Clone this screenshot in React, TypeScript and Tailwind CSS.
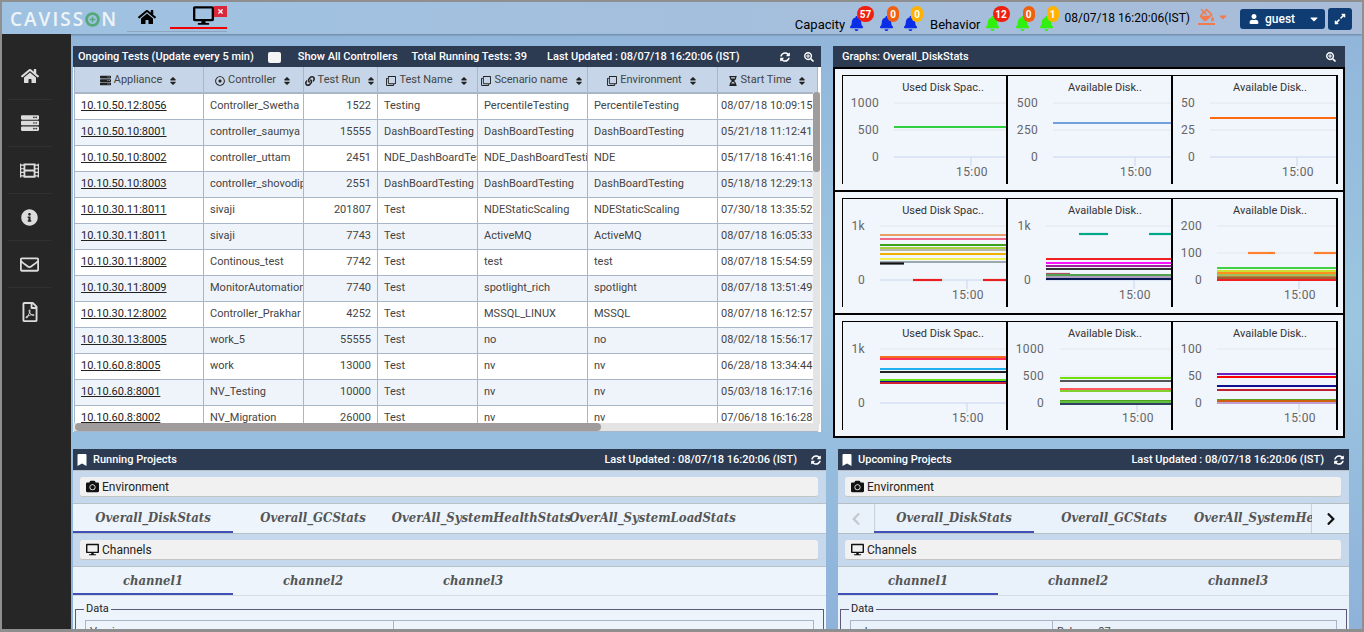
import { FaHome, FaDesktop, FaTimes, FaServer, FaFilm, FaInfoCircle, FaRegEnvelope, FaRegFilePdf, FaBell, FaUser, FaCaretDown, FaExpandAlt, FaCamera, FaBookmark, FaSyncAlt, FaSearchPlus, FaSort, FaRegDotCircle, FaLink, FaRegClone, FaHourglassHalf, FaFillDrip, FaChevronLeft, FaChevronRight } from 'react-icons/fa';
import type { ReactNode } from 'react';

const cols = [
  { label: 'Appliance', icon: <FaServer size={11} />, w: 'w-[129px]' },
  { label: 'Controller', icon: <FaRegDotCircle size={10} />, w: 'w-[100px]' },
  { label: 'Test Run', icon: <FaLink size={10} />, w: 'w-[74px]' },
  { label: 'Test Name', icon: <FaRegClone size={10} />, w: 'w-[100px]' },
  { label: 'Scenario name', icon: <FaRegClone size={10} />, w: 'w-[110px]' },
  { label: 'Environment', icon: <FaRegClone size={10} />, w: 'w-[130px]' },
  { label: 'Start Time', icon: <FaHourglassHalf size={10} />, w: 'w-[100px]' },
];

const rows = [
  ['10.10.50.12:8056', 'Controller_Swetha', '1522', 'Testing', 'PercentileTesting', 'PercentileTesting', '08/07/18 10:09:15'],
  ['10.10.50.10:8001', 'controller_saumya', '15555', 'DashBoardTesting', 'DashBoardTesting', 'DashBoardTesting', '05/21/18 11:12:41'],
  ['10.10.50.10:8002', 'controller_uttam', '2451', 'NDE_DashBoardTesting', 'NDE_DashBoardTesting', 'NDE', '05/17/18 16:41:16'],
  ['10.10.50.10:8003', 'controller_shovodip', '2551', 'DashBoardTesting', 'DashBoardTesting', 'DashBoardTesting', '05/18/18 12:29:13'],
  ['10.10.30.11:8011', 'sivaji', '201807', 'Test', 'NDEStaticScaling', 'NDEStaticScaling', '07/30/18 13:35:52'],
  ['10.10.30.11:8011', 'sivaji', '7743', 'Test', 'ActiveMQ', 'ActiveMQ', '08/07/18 16:05:33'],
  ['10.10.30.11:8002', 'Continous_test', '7742', 'Test', 'test', 'test', '08/07/18 15:54:59'],
  ['10.10.30.11:8009', 'MonitorAutomation', '7740', 'Test', 'spotlight_rich', 'spotlight', '08/07/18 13:51:49'],
  ['10.10.30.12:8002', 'Controller_Prakhar', '4252', 'Test', 'MSSQL_LINUX', 'MSSQL', '08/07/18 16:12:57'],
  ['10.10.30.13:8005', 'work_5', '55555', 'Test', 'no', 'no', '08/02/18 15:56:17'],
  ['10.10.60.8:8005', 'work', '13000', 'Test', 'nv', 'nv', '06/28/18 13:34:44'],
  ['10.10.60.8:8001', 'NV_Testing', '10000', 'Test', 'nv', 'nv', '05/03/18 16:17:16'],
  ['10.10.60.8:8002', 'NV_Migration', '26000', 'Test', 'nv', 'nv', '07/06/18 16:16:28'],
];

type Seg = { y: number; color: string; from?: number; to?: number };
type ChartProps = { title: string; labels: string[]; labelRight: number; left: number; tick: number; top?: number; bottom?: number; segs: Seg[] };

function Chart({ title, labels, labelRight, left, tick, top = 27, bottom = 81, segs }: ChartProps) {
  const mid = (top + bottom) / 2;
  const ys = labels.length === 3 ? [top, mid, bottom] : [top, bottom];
  return (
    <svg viewBox="0 0 163 108" className="h-[108px] w-[165px] shrink-0 border-r-2 border-black bg-[#f1f5fc] [font-family:Roboto,sans-serif]">
      <text x={title.startsWith('Used') ? 100 : 97} y="15" textAnchor="middle" fontSize="11" fill="#333">{title}</text>
      {ys.map((y, i) => (
        <g key={i}>
          <line x1={left} x2="163" y1={y} y2={y} stroke={i === ys.length - 1 ? '#c8d6ee' : '#e4e6e8'} />
          <text x={labelRight} y={y + 3.5} textAnchor="end" fontSize="12" fill="#666" letterSpacing="0.3">{labels[i]}</text>
        </g>
      ))}
      <line x1={tick} x2={tick} y1={bottom} y2={bottom + 9} stroke="#c8d6ee" />
      <text x={tick + 1} y={bottom + 19} textAnchor="middle" fontSize="12" fill="#666" letterSpacing="0.4">15:00</text>
      {segs.map((s, i) => (
        <line key={i} x1={s.from ?? left} x2={s.to ?? 163} y1={s.y} y2={s.y} stroke={s.color} strokeWidth="2.2" />
      ))}
    </svg>
  );
}

function ChartRow({ children }: { children: ReactNode }) {
  return <div className="flex h-[123px] border-b-2 border-black pt-[6px] pl-[7px] last:border-b-0">
    <div className="flex h-[109px] border border-r-0 border-black">{children}</div>
  </div>;
}

function Bell({ color, badge, badgeColor, wide }: { color: string; badge: string; badgeColor: string; wide?: boolean }) {
  return (
    <div className="relative mt-[14px] h-[16px] w-[13px]">
      <FaBell size={15} color={color} />
      <span className={`absolute top-[-10px] left-[8px] flex h-[16px] items-center justify-center rounded-full text-[10px] font-bold text-white ${wide ? 'w-[17px]' : 'w-[12px]'} ${badgeColor}`}>{badge}</span>
    </div>
  );
}

function PanelHead({ title, right }: { title: string; right: ReactNode }) {
  return (
    <div className="flex h-[21px] items-center justify-between bg-[#2c3a52] pt-[1px] pr-[5px] pl-[3px] text-[11px] font-medium text-white">
      <div className="flex items-center gap-[5px]"><FaBookmark size={12} />{title}</div>
      {right}
    </div>
  );
}

function Bar({ icon, label }: { icon: ReactNode; label: string }) {
  return (
    <div className="border-y border-[#b8c0c8] bg-[#c6d8ec] py-[6px] pr-[8px] pl-[7px]">
      <div className="flex h-[20px] items-center gap-[3px] rounded-[3px] border-b border-[#c4c4c4] bg-[#f1f1f1] pl-[6px] text-[12px] text-[#222]">{icon}{label}</div>
    </div>
  );
}

function Tab({ label, active, w = 'min-w-[160px]' }: { label: string; active?: boolean; w?: string }) {
  return (
    <div className={`flex h-full shrink-0 items-center justify-center border-b-2 pt-[1px] [font-family:DejaVu_Serif_Condensed,DejaVu_Serif,serif] text-[13px] font-bold whitespace-nowrap text-[#555] italic ${w} ${active ? 'border-[#3f51b5]' : 'border-transparent'}`}>{label}</div>
  );
}

const chanTabs = (
  <div className="flex h-[29px] border-b border-[#d4dce4]">
    <Tab label="channel1" active />
    <Tab label="channel2" />
    <Tab label="channel3" />
  </div>
);

function DataBox({ leftW, left, right }: { leftW: string; left: string; right: string }) {
  return (
    <fieldset className="mx-[2px] mt-[7px] h-[40px] border border-[#5a5a78] px-[9px]">
      <legend className="ml-[-1px] px-[2px] text-[11px] leading-[12px] text-[#222]">Data</legend>
      <div className="mt-[5px] flex h-[30px] border border-[#a8b4c8] text-[11px] text-[#444]">
        <div className={`border-r border-[#a8b4c8] pt-[3px] pl-[4px] ${leftW}`}>{left}</div>
        <div className="pt-[3px] pl-[4px]">{right}</div>
      </div>
    </fieldset>
  );
}

export default function App() {
  return (
    <div className="h-[632px] w-[1364px] overflow-hidden border-2 border-b-[3px] border-[#8f8f8f] bg-gradient-to-b from-[#90b4da] via-[#9cc6e0] to-[#8fb2da] [font-family:Roboto,sans-serif] text-[#444]">
      {/* top bar */}
      <div className="flex h-[32px] items-start bg-gradient-to-r from-[#9fc2e2] to-[#a8bcd8] shadow-[0_1px_2px_rgba(0,0,0,0.3)]">
        <div className="mt-[3px] ml-[8px] flex w-[117px] items-center [font-family:Open_Sans,sans-serif] text-[19px] font-semibold tracking-[2px] text-[#eef4f6]">
          CAVISS
          <svg viewBox="0 0 16 16" className="mr-[1px] h-[15px] w-[15px] shrink-0"><circle cx="8" cy="8" r="6.3" fill="none" stroke="#55a87a" strokeWidth="3" /><path d="M8 5v6M5 8h6" stroke="#55a87a" strokeWidth="1.5" /></svg>
          N
        </div>
        <div className="flex h-[30px] border-b border-[#8ea6bf]">
          <div className="flex w-[43px] justify-center pt-[6px] pr-[4px] text-black"><FaHome size={18} /></div>
          <div className="relative flex h-[27px] w-[57px] justify-end border-b-2 border-[#f00000] pt-[3px] pr-[13px] text-black">
            <FaDesktop size={21} />
            <span className="absolute top-[4px] right-0 flex h-[11px] w-[13px] items-center justify-center bg-[#d9283c] text-white"><FaTimes size={7} /></span>
          </div>
        </div>
        <div className="ml-auto flex items-start pr-[10px] text-black">
          <span className="mt-[15px] mr-[4px] text-[13px] leading-[16px]">Capacity</span>
          <Bell color="#0a2ee8" badge="57" badgeColor="bg-[#f02010]" wide />
          <div className="w-[17px]" />
          <Bell color="#0a2ee8" badge="0" badgeColor="bg-[#f06010]" />
          <div className="w-[11px]" />
          <Bell color="#0a2ee8" badge="0" badgeColor="bg-[#ffb300]" />
          <span className="mt-[15px] mr-[4px] ml-[14px] text-[13px] leading-[16px]">Behavior</span>
          <Bell color="#30f010" badge="12" badgeColor="bg-[#f02010]" wide />
          <div className="w-[17px]" />
          <Bell color="#30f010" badge="0" badgeColor="bg-[#f06010]" />
          <div className="w-[11px]" />
          <Bell color="#30f010" badge="1" badgeColor="bg-[#ffb300]" />
          <span className="mt-[8px] ml-[13px] text-[12px] leading-[16px] whitespace-nowrap">08/07/18 16:20:06(IST)</span>
          <span className="mt-[6px] ml-[8px] flex w-[17px] flex-col items-center text-[#f47a50]"><FaFillDrip size={14} /><span className="mt-[1px] h-[2px] w-[17px] bg-[#f47a50]" /></span>
          <span className="mt-[9px] ml-[2px] text-[#f47a50]"><FaCaretDown size={12} /></span>
          <div className="mt-[7px] ml-[11px] flex h-[20px] w-[85px] items-center rounded-[3px] bg-[#0f3c72] pr-[5px] pl-[9px] text-[12px] font-medium text-white">
            <FaUser size={10} /><span className="ml-[6px]">guest</span><span className="ml-auto"><FaCaretDown size={12} /></span>
          </div>
          <div className="mt-[6px] ml-[3px] flex h-[22px] w-[24px] items-center justify-center rounded-[3px] bg-[#0f3c72] text-white"><FaExpandAlt size={12} /></div>
        </div>
      </div>

      <div className="flex h-[598px]">
        {/* sidebar */}
        <div className="w-[69px] shrink-0 bg-[#262626] pt-[19px] pr-[19px] pl-[5px] text-[#dcdcdc]">
          {[<FaHome size={18} />, <FaServer size={18} />, <FaFilm size={19} />, <FaInfoCircle size={17} />, <FaRegEnvelope size={19} />, <FaRegFilePdf size={20} />].map((ic, i) => (
            <div key={i} className="flex h-[47px] items-center justify-center border-b border-[#303030] last:border-b-0">{ic}</div>
          ))}
        </div>

        <div className="w-[1291px] shrink-0 px-[2px] pt-[12px]">
          <div className="flex gap-[12px]">
            {/* ongoing tests */}
            <div className="h-[386px] w-[748px] shrink-0 overflow-hidden bg-white">
              <div className="flex h-[21px] items-center bg-[#2c3a52] pt-[1px] pr-[7px] pl-[5px] text-[11px] font-medium text-white">
                <span>Ongoing Tests (Update every 5 min)</span>
                <span className="ml-[14px] h-[11px] w-[13px] rounded-[2px] bg-[#f4f4f4]" />
                <span className="ml-[17px]">Show All Controllers</span>
                <span className="ml-[14px]">Total Running Tests: 39</span>
                <span className="ml-[20px]">Last Updated : 08/07/18 16:20:06 (IST)</span>
                <span className="ml-auto flex gap-[14px]"><FaSyncAlt size={10} /><FaSearchPlus size={10} /></span>
              </div>
              <div className="relative h-[365px] overflow-hidden pl-[1px]">
                <table className="w-[743px] table-fixed border-collapse text-[11px]">
                  <thead>
                    <tr className="h-[26px] bg-[#c6d6e8] text-[#444]">
                      {cols.map((c) => (
                        <th key={c.label} className={`border-x border-b-2 border-[#a9b6c8] px-0 pt-[2px] font-normal whitespace-nowrap ${c.w}`}>
                          <span className="flex items-center justify-center gap-[3px]">
                            <span className="text-[#222]">{c.icon}</span>{c.label}<span className="ml-[3px] text-[#222]"><FaSort size={10} /></span>
                          </span>
                        </th>
                      ))}
                    </tr>
                  </thead>
                  <tbody>
                    {rows.map((r, i) => (
                      <tr key={i} className={`h-[26px] ${i % 2 ? 'bg-[#eff4fa]' : 'bg-white'}`}>
                        {r.map((v, j) => (
                          <td key={j} className={`overflow-hidden border border-[#a9b6c8] px-[6px] whitespace-nowrap ${j === 0 ? 'text-[#222] underline' : ''} ${j === 2 ? 'text-right' : ''} ${j === 6 ? 'pr-0 pl-[3px]' : ''}`}>{v}</td>
                        ))}
                      </tr>
                    ))}
                  </tbody>
                </table>
                <div className="absolute top-[25px] right-[1px] h-[332px] w-[7px] bg-[#e4e4e4]"><div className="h-[80px] w-full rounded-[3px] bg-[#a09c9c]" /></div>
                <div className="absolute bottom-[1px] left-0 h-[8px] w-[746px] bg-[#e4e4e4]"><div className="ml-[2px] h-full w-[526px] rounded-[4px] bg-[#a09c9c]" /></div>
              </div>
            </div>

            {/* graphs */}
            <div className="w-[512px] shrink-0">
              <div className="flex h-[21px] items-center justify-between bg-[#2c3a52] pt-[1px] pr-[9px] pl-[9px] text-[11px] font-medium text-white">
                Graphs: Overall_DiskStats<FaSearchPlus size={10} />
              </div>
              <div className="h-[371px] border-2 border-black bg-[#f1f5fc]">
                <ChartRow>
                  <Chart title="Used Disk Spac.." labels={['1000', '500', '0']} labelRight={36} left={51} tick={128} segs={[{ y: 51, color: '#30d040' }]} />
                  <Chart title="Available Disk.." labels={['500', '250', '0']} labelRight={30} left={45} tick={127} segs={[{ y: 47, color: '#70a0e0' }]} />
                  <Chart title="Available Disk.." labels={['50', '25', '0']} labelRight={22} left={37} tick={124} segs={[{ y: 42, color: '#ff6a10' }]} />
                </ChartRow>
                <ChartRow>
                  <Chart title="Used Disk Spac.." labels={['1k', '0']} labelRight={22} left={37} tick={124} segs={[
                    { y: 36, color: '#e8a06a' }, { y: 40, color: '#f06a8a' }, { y: 46, color: '#3aa31a' }, { y: 49, color: '#a8d040' }, { y: 51, color: '#b8b8a8' },
                    { y: 55, color: '#f0b000' }, { y: 60, color: '#f0f050' }, { y: 63, color: '#9aa8b0' }, { y: 64.5, color: '#111', to: 61 }, { y: 81, color: '#e82020', from: 70, to: 99 }, { y: 81, color: '#e82020', from: 140 },
                  ]} />
                  <Chart title="Available Disk.." labels={['1k', '0']} labelRight={23} left={38} tick={126} segs={[
                    { y: 35, color: '#00a88a', from: 71, to: 100 }, { y: 35, color: '#00a88a', from: 141 }, { y: 60, color: '#f02020' }, { y: 64, color: '#ff10ff' }, { y: 67, color: '#a020a0' },
                    { y: 70, color: '#333' }, { y: 75, color: '#b05060', to: 62 }, { y: 76, color: '#50a050' }, { y: 78, color: '#b0a0c0' }, { y: 80, color: '#0a1a50' },
                  ]} />
                  <Chart title="Available Disk.." labels={['200', '100', '0']} labelRight={29} left={44} tick={126} segs={[
                    { y: 54, color: '#ff8030', from: 75, to: 102 }, { y: 54, color: '#ff8030', from: 141 }, { y: 69, color: '#40d040' }, { y: 72, color: '#d0e030' }, { y: 74, color: '#ff9020' },
                    { y: 76, color: '#a0c060' }, { y: 78, color: '#c08040' }, { y: 79, color: '#a06030' }, { y: 81, color: '#f02020' },
                  ]} />
                </ChartRow>
                <ChartRow>
                  <Chart title="Used Disk Spac.." labels={['1k', '0']} labelRight={22} left={37} tick={124} segs={[
                    { y: 35, color: '#f07020' }, { y: 37, color: '#ff3060' }, { y: 47, color: '#20b0f0' }, { y: 50, color: '#222' }, { y: 58, color: '#60e010' }, { y: 60, color: '#10108a' }, { y: 61, color: '#d02030' },
                  ]} />
                  <Chart title="Available Disk.." labels={['1000', '500', '0']} labelRight={36} left={52} tick={129} segs={[
                    { y: 56, color: '#70e010' }, { y: 59, color: '#555' }, { y: 67, color: '#ff5a60' }, { y: 69, color: '#80d030' }, { y: 79, color: '#50a020' }, { y: 80, color: '#60c040' }, { y: 82, color: '#304060' },
                  ]} />
                  <Chart title="Available Disk.." labels={['100', '50', '0']} labelRight={29} left={44} tick={126} segs={[
                    { y: 52, color: '#7020c0' }, { y: 55, color: '#ff0000' }, { y: 64, color: '#101090' }, { y: 68, color: '#c02030' }, { y: 78, color: '#60a020' }, { y: 79, color: '#d06010' }, { y: 81, color: '#c0a0d0' },
                  ]} />
                </ChartRow>
              </div>
            </div>
          </div>

          {/* projects */}
          <div className="mt-[11px] flex gap-[12px]">
            <div className="h-[200px] w-[753px] shrink-0 overflow-hidden bg-[#edf4fb]">
              <PanelHead title="Running Projects" right={
                <span className="flex items-center gap-[14px]">Last Updated : 08/07/18 16:20:06 (IST)<FaSyncAlt size={10} /></span>
              } />
              <Bar icon={<FaCamera size={13} color="#111" />} label="Environment" />
              <div className="flex h-[29px]">
                <Tab label="Overall_DiskStats" active />
                <Tab label="Overall_GCStats" />
                <Tab label="OverAll_SystemHealthStats" w="w-[177px]" />
                <Tab label="OverAll_SystemLoadStats" w="w-[165px]" />
              </div>
              <Bar icon={<FaDesktop size={13} color="#111" />} label="Channels" />
              {chanTabs}
              <DataBox leftW="w-[308px]" left="Version" right="" />
            </div>
            <div className="h-[200px] w-[511px] shrink-0 overflow-hidden bg-[#e9f1fa]">
              <PanelHead title="Upcoming Projects" right={
                <span className="flex items-center gap-[10px]">Last Updated : 08/07/18 16:20:06 (IST)<FaSyncAlt size={10} /></span>
              } />
              <Bar icon={<FaCamera size={13} color="#111" />} label="Environment" />
              <div className="flex h-[29px]">
                <div className="flex w-[36px] shrink-0 items-center justify-center text-[#c4c8cc] shadow-[1px_0_1px_rgba(0,0,0,0.12)]"><FaChevronLeft size={14} /></div>
                <div className="flex min-w-0 flex-1 overflow-hidden">
                  <Tab label="Overall_DiskStats" active />
                  <Tab label="Overall_GCStats" />
                  <Tab label="OverAll_SystemHealthStats" />
                </div>
                <div className="flex w-[37px] shrink-0 items-center justify-center text-[#111] shadow-[-1px_0_1px_rgba(0,0,0,0.12)]"><FaChevronRight size={14} /></div>
              </div>
              <Bar icon={<FaDesktop size={13} color="#111" />} label="Channels" />
              {chanTabs}
              <DataBox leftW="w-[202px]" left="ml" right="Release 07" />
            </div>
          </div>
        </div>
      </div>
    </div>
  );
}
